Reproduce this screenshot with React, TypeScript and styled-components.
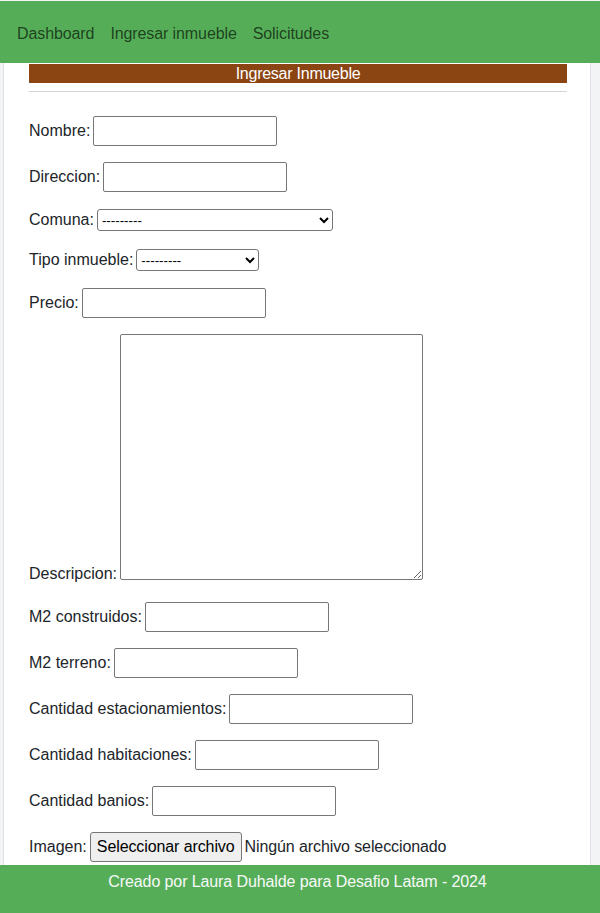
import React from "react";
import styled, { createGlobalStyle } from "styled-components";

const GlobalStyle = createGlobalStyle`
  html, body { margin: 0; padding: 0; }
  body {
    font-family: "Liberation Sans", Arial, sans-serif;
    font-size: 16px;
    color: #212529;
    background: #f3f4f6;
  }
  * { box-sizing: border-box; }
`;

const Page = styled.div`
  height: 100vh;
  display: flex;
  flex-direction: column;
  padding-top: 1px;
  overflow: hidden;
`;

const NavBar = styled.nav`
  height: 62px;
  flex: none;
  background: #55ae57;
  display: flex;
  align-items: center;
  gap: 16px;
  padding: 4px 0 0 17px;
`;

const NavLink = styled.a`
  color: rgba(0, 0, 0, 0.65);
  text-decoration: none;
  font-size: 16px;
  letter-spacing: -0.1px;
`;

const Container = styled.main`
  flex: 1;
  margin: 0 9px 0 3px;
  background: #fff;
  border-left: 1px solid #dee2e6;
  border-right: 1px solid #dee2e6;
  padding: 1px 23px 0 25px;
`;

const TitleBar = styled.h1`
  margin: 0;
  height: 19px;
  line-height: 19px;
  background: #8b4513;
  color: #fff;
  font-size: 16px;
  font-weight: normal;
  text-align: center;
  letter-spacing: -0.25px;
`;

const Divider = styled.hr`
  margin: 8px 0 8px;
  border: 0;
  border-top: 1px solid #d3d5d7;
`;

const Form = styled.form`
  display: flex;
  flex-direction: column;
  gap: 16px;
  padding-top: 16px;
`;

const Row = styled.div<{ $h?: number }>`
  display: flex;
  align-items: center;
  gap: 3px;
  height: ${(p) => (p.$h ? `${p.$h}px` : "auto")};
`;

const DescRow = styled.div`
  display: flex;
  align-items: flex-end;
  gap: 3px;
  padding-bottom: 6px;
`;

const Label = styled.label<{ $lift?: number }>`
  font-size: 16px;
  line-height: 18px;
  white-space: nowrap;
  margin-bottom: ${(p) => (p.$lift ? `${p.$lift}px` : "0")};
`;

const TextInput = styled.input`
  width: 184px;
  height: 30px;
  border: 1px solid #767676;
  border-radius: 2px;
  background: #fff;
  font: 16px "Liberation Sans", Arial, sans-serif;
  padding: 2px 6px;
  margin: 0;
`;

const Select = styled.select<{ $w: number }>`
  width: ${(p) => p.$w}px;
  height: 22px;
  border: 1px solid #767676;
  border-radius: 3px;
  background: #fff;
  color: #000;
  font: 13.33px "Liberation Sans", Arial, sans-serif;
  margin: 0;
`;

const TextArea = styled.textarea`
  width: 303px;
  height: 246px;
  border: 1px solid #767676;
  border-radius: 2px;
  margin: 0;
`;

const FileButton = styled.button`
  height: 30px;
  padding: 0 6px;
  border: 1px solid #767676;
  border-radius: 3px;
  background: #efefef;
  color: #000;
  font: 16px "Liberation Sans", Arial, sans-serif;
  letter-spacing: -0.1px;
  margin: 0;
`;

const FileText = styled.span`
  font-size: 16px;
  color: #212529;
  letter-spacing: -0.1px;
`;

const Footer = styled.footer`
  flex: none;
  height: 48px;
  background: #55ae57;
  color: #f8f9fa;
  text-align: center;
  padding: 7px 5px 0 0;
  font-size: 16px;
  line-height: 19px;
  letter-spacing: -0.1px;
`;

const textFields = [
  "M2 construidos",
  "M2 terreno",
  "Cantidad estacionamientos",
  "Cantidad habitaciones",
  "Cantidad banios",
];

export default function App() {
  return (
    <>
      <GlobalStyle />
      <Page>
        <NavBar>
          <NavLink href="#">Dashboard</NavLink>
          <NavLink href="#">Ingresar inmueble</NavLink>
          <NavLink href="#">Solicitudes</NavLink>
        </NavBar>
        <Container>
          <TitleBar>Ingresar Inmueble</TitleBar>
          <Divider />
          <Form onSubmit={(e) => e.preventDefault()}>
            <Row $h={30}>
              <Label>Nombre:</Label>
              <TextInput type="text" />
            </Row>
            <Row $h={30}>
              <Label>Direccion:</Label>
              <TextInput type="text" />
            </Row>
            <Row $h={24}>
              <Label>Comuna:</Label>
              <Select $w={236} defaultValue="">
                <option value="">---------</option>
              </Select>
            </Row>
            <Row $h={24}>
              <Label>Tipo inmueble:</Label>
              <Select $w={123} defaultValue="">
                <option value="">---------</option>
              </Select>
            </Row>
            <Row $h={30}>
              <Label>Precio:</Label>
              <TextInput type="text" />
            </Row>
            <DescRow>
              <Label $lift={-3}>Descripcion:</Label>
              <TextArea />
            </DescRow>
            {textFields.map((f) => (
              <Row $h={30} key={f}>
                <Label>{f}:</Label>
                <TextInput type="text" />
              </Row>
            ))}
            <Row $h={30}>
              <Label>Imagen:</Label>
              <FileButton type="button">Seleccionar archivo</FileButton>
              <FileText>Ningún archivo seleccionado</FileText>
            </Row>
          </Form>
        </Container>
        <Footer>Creado por Laura Duhalde para Desafio Latam - 2024</Footer>
      </Page>
    </>
  );
}
